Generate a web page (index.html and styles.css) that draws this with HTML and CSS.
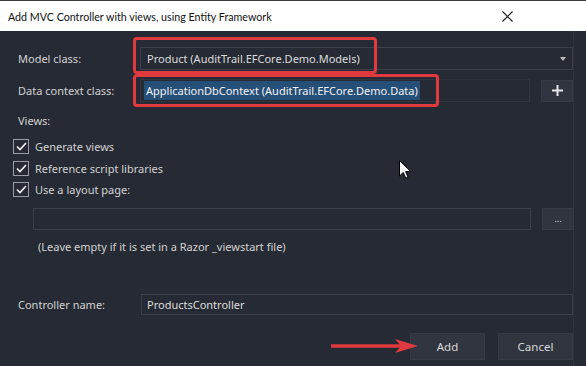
FILE: index.html
```html
<!DOCTYPE html>
<html>
<head>
<meta charset="utf-8">
<link rel="stylesheet" href="styles.css">
</head>
<body>
<div class="dialog">
  <div class="titlebar">
    <span class="title">Add MVC Controller with views, using Entity Framework</span>
    <svg class="close" width="11" height="11" viewBox="0 0 11 11"><path d="M0.5 0.5L10.5 10.5M10.5 0.5L0.5 10.5" stroke="#1a1a1a" stroke-width="1.1"/></svg>
  </div>
  <div class="content">
    <div class="field-row model-row">
      <label class="label">Model class:</label>
      <div class="combo model-combo">
        <span class="combo-text">Product (AuditTrail.EFCore.Demo.Models)</span>
        <svg class="caret" width="6" height="4" viewBox="0 0 6 4"><path d="M0 0H6L3 4Z" fill="#bdbdbd"/></svg>
      </div>
    </div>
    <div class="field-row ctx-row">
      <label class="label">Data context class:</label>
      <div class="combo ctx-combo">
        <span class="selected">ApplicationDbContext (AuditTrail.EFCore.Demo.Data)</span>
      </div>
      <button class="btn square plus">
        <svg width="11" height="11" viewBox="0 0 11 11"><path d="M5.5 0V11M0 5.5H11" stroke="#e6e6e6" stroke-width="2"/></svg>
      </button>
    </div>
    <div class="views-label">Views:</div>
    <div class="checks">
      <div class="check-row"><span class="checkbox"><svg width="11" height="9" viewBox="0 0 11 9"><path d="M1 4.5L4 7.5L10 1" stroke="#f0f0f0" stroke-width="1.6" fill="none"/></svg></span>Generate views</div>
      <div class="check-row"><span class="checkbox"><svg width="11" height="9" viewBox="0 0 11 9"><path d="M1 4.5L4 7.5L10 1" stroke="#f0f0f0" stroke-width="1.6" fill="none"/></svg></span>Reference script libraries</div>
      <div class="check-row"><span class="checkbox"><svg width="11" height="9" viewBox="0 0 11 9"><path d="M1 4.5L4 7.5L10 1" stroke="#f0f0f0" stroke-width="1.6" fill="none"/></svg></span>Use a layout page:</div>
    </div>
    <div class="layout-row">
      <div class="input layout-input"></div>
      <button class="btn square dots">...</button>
    </div>
    <div class="hint">(Leave empty if it is set in a Razor _viewstart file)</div>
    <div class="field-row ctrl-row">
      <label class="label">Controller name:</label>
      <div class="input ctrl-input">ProductsController</div>
    </div>
    <div class="buttons">
      <button class="btn action">Add</button>
      <button class="btn action">Cancel</button>
    </div>

    <div class="hl hl-model"></div>
    <div class="hl hl-ctx"></div>
    <svg class="arrow" width="90" height="16" viewBox="0 0 90 16"><path d="M0 8H72" stroke="#e0393e" stroke-width="3.5"/><path d="M64 1L87 8L64 15L70 8Z" fill="#e0393e"/></svg>
    <svg class="cursor" width="13" height="19" viewBox="0 0 13 19"><path d="M0.5 0.5V16L4.3 12.4L6.8 18.2L9 17.2L6.6 11.6H11.8Z" fill="#fff" stroke="#000" stroke-width="1"/></svg>
  </div>
</div>
</body>
</html>
```
FILE: styles.css
```css
* { box-sizing: border-box; }
html, body { margin: 0; padding: 0; }
body {
  width: 586px;
  height: 366px;
  overflow: hidden;
  background: #262a34;
  font-family: "Noto Sans", "Open Sans", sans-serif;
  font-size: 11px;
  color: #d2d2d2;
}
.dialog { width: 586px; height: 366px; display: flex; flex-direction: column; }
.titlebar {
  height: 31px;
  background: #ffffff;
  border-top: 1px solid #3a3a3a;
  display: flex;
  align-items: center;
  justify-content: space-between;
  padding: 0 73px 0 8px;
  color: #111;
  font-family: "Lato", "Noto Sans", sans-serif;
  font-size: 10.7px;
}
.content {
  position: relative;
  flex: 1;
  padding: 16px 0 0 13px;
  border-right: 1px solid #2f333c;
  margin-right: 12px;
}
.field-row { display: flex; align-items: center; }
.label { width: 127px; flex: none; padding-left: 5px; }
.combo, .input {
  height: 23px;
  border: 1px solid #3b3f49;
  background: #262a34;
  display: flex;
  align-items: center;
  color: #dcdcdc;
}
.model-combo { flex: 1; justify-content: space-between; padding: 0 6px 0 6px; }
.ctx-row { margin-top: 9px; }
.ctx-combo { width: 390px; flex: none; padding-left: 3px; border-color: #30343e; }
.selected { background: #264f78; color: #f2f2f2; padding: 2px 2px; }
.btn {
  background: #31353f;
  border: 1px solid #363a44;
  color: #d8d8d8;
  font-family: inherit;
  font-size: 11px;
  display: flex;
  align-items: center;
  justify-content: center;
  padding: 0;
  flex: none;
}
.square { width: 32px; height: 22px; margin-left: 11px; }
.views-label { margin-top: 10px; padding-left: 5px; height: 18px; line-height: 18px; }
.checks { margin-top: 6px; }
.check-row { display: flex; align-items: center; height: 21.5px; }
.checkbox {
  width: 16px; height: 15px;
  border: 1px solid #9a9da3;
  display: flex; align-items: center; justify-content: center;
  margin-right: 6px;
}
.layout-row { display: flex; align-items: center; margin-top: 7px; padding-left: 20px; }
.layout-input { width: 498px; height: 22px; flex: none; }
.dots { font-size: 9px; }
.hint { margin-top: 8px; padding-left: 25px; height: 18px; line-height: 18px; }
.ctrl-row { margin-top: 38px; }
.ctrl-input { flex: 1; height: 21px; padding-left: 5px; margin-left: 1px; }
.buttons { display: flex; justify-content: flex-end; gap: 13px; margin-top: 18px; }
.action { width: 75px; height: 27px; font-size: 11.5px; }
.hl {
  position: absolute;
  border: 3px solid #e0393e;
  border-radius: 4px;
}
.hl-model { left: 133px; top: 6px; width: 244px; height: 37px; }
.hl-ctx { left: 133px; top: 43px; width: 306px; height: 33px; }
.arrow { position: absolute; left: 331px; top: 307px; }
.cursor { position: absolute; left: 399px; top: 129px; }
```
